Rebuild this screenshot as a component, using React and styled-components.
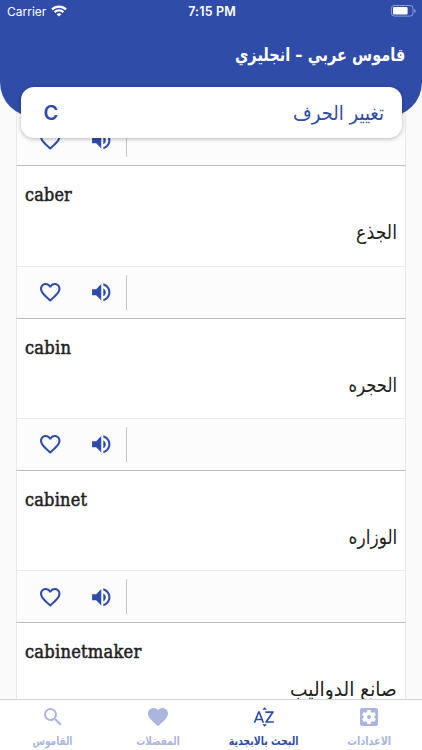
import styled, { createGlobalStyle } from "styled-components";
import {
  MdFavorite,
  MdFavoriteBorder,
  MdSearch,
  MdSettingsApplications,
  MdSortByAlpha,
  MdVolumeUp,
} from "react-icons/md";

const words = [
  { en: "caber", ar: "الجذع", enScale: 0.99, arScale: 0.87 },
  { en: "cabin", ar: "الحجره", enScale: 1.01, arScale: 0.82 },
  { en: "cabinet", ar: "الوزاره", enScale: 1.0, arScale: 0.85 },
  { en: "cabinetmaker", ar: "صانع الدواليب", enScale: 1.01, arScale: 0.93 },
];

const tabs = [
  { label: "القاموس", icon: MdSearch, scale: 0.78 },
  { label: "المفضلات", icon: MdFavorite, scale: 0.78 },
  { label: "البحث بالابجدية", icon: MdSortByAlpha, active: true, scale: 0.82 },
  { label: "الاعدادات", icon: MdSettingsApplications, scale: 0.84 },
];

export default function App() {
  return (
    <Screen>
      <GlobalStyle />
      <Header>
        <StatusBar>
          <Carrier>
            Carrier
            <WifiIcon />
          </Carrier>
          <Clock>7:15 PM</Clock>
          <BatteryIcon />
        </StatusBar>
        <Title>
          <Fit $scale={0.81}>قاموس عربي – انجليزي</Fit>
        </Title>
      </Header>

      <LetterPicker>
        <Letter>C</Letter>
        <PickerLabel>
          <Fit $scale={0.9}>تغيير الحرف</Fit>
        </PickerLabel>
      </LetterPicker>

      <ListArea>
        <WordList>
          <WordCard $collapsed>
            <WordActions />
          </WordCard>
          {words.map((word) => (
            <WordCard key={word.en}>
              <WordBody>
                <English>
                  <Fit $scale={word.enScale} $origin="left">{word.en}</Fit>
                </English>
                <Arabic>
                  <Fit $scale={word.arScale}>{word.ar}</Fit>
                </Arabic>
              </WordBody>
              <WordActions />
            </WordCard>
          ))}
        </WordList>
      </ListArea>

      <TabBar>
        {tabs.map(({ label, icon: Icon, active, scale }) => (
          <Tab key={label} $active={active}>
            <Icon />
            <TabLabel>
              <Fit $scale={scale} $origin="center">{label}</Fit>
            </TabLabel>
          </Tab>
        ))}
      </TabBar>
    </Screen>
  );
}

function WordActions() {
  return (
    <Actions>
      <ActionButton aria-label="favorite">
        <MdFavoriteBorder />
      </ActionButton>
      <ActionButton aria-label="listen">
        <MdVolumeUp />
      </ActionButton>
      <Divider />
    </Actions>
  );
}

function WifiIcon() {
  return (
    <svg width="16" height="12" viewBox="0 0 16 12" fill="none" stroke="#fff" strokeWidth="2.2">
      <path d="M1 4.4C4.9.6 11.1.6 15 4.4" />
      <path d="M3.6 7.1c2.5-2.4 6.3-2.4 8.8 0" />
      <path d="M8 11.6 5.6 9.2c1.4-1.3 3.4-1.3 4.8 0z" fill="#fff" stroke="none" />
    </svg>
  );
}

function BatteryIcon() {
  return (
    <svg width="26" height="12" viewBox="0 0 26 12">
      <rect x="0.5" y="0.5" width="21.5" height="10.6" rx="2.8" fill="none" stroke="#fff" strokeOpacity="0.45" />
      <rect x="2" y="2" width="14.6" height="7.6" rx="1.4" fill="#fff" />
      <path d="M23.3 4v3.8c.9-.3 1.3-1 1.3-1.9s-.4-1.6-1.3-1.9z" fill="#fff" fillOpacity="0.5" />
    </svg>
  );
}

// Styles
const GlobalStyle = createGlobalStyle`
  * {
    box-sizing: border-box;
  }

  body {
    margin: 0;
    font-family: "DejaVu Sans", sans-serif;
  }
`;

const Screen = styled.div`
  width: 422px;
  height: 750px;
  display: flex;
  flex-direction: column;
  background: #fafafa;
  overflow: hidden;
`;

const Header = styled.header`
  flex: none;
  height: 117px;
  background: #2f4ca9;
  border-radius: 0 0 35px 35px;
  color: #fff;
  position: relative;
  z-index: 1;
`;

const StatusBar = styled.div`
  height: 22px;
  display: grid;
  grid-template-columns: 1fr auto 1fr;
  align-items: center;
  padding: 0 5px 0 7px;
  font-family: Inter, sans-serif;
  font-size: 12.5px;

  > svg {
    justify-self: end;
  }
`;

const Carrier = styled.div`
  display: flex;
  align-items: center;
  gap: 5px;
  font-size: 12px;
`;

const Clock = styled.div`
  font-weight: 600;
  letter-spacing: 0.15px;
`;

const Title = styled.h1`
  margin: 0;
  padding: 19px 17px 0 0;
  direction: rtl;
  font-size: 18px;
  line-height: 28px;
  font-weight: bold;
`;

/* Stretches a run of text horizontally from its anchored side */
const Fit = styled.span`
  display: inline-block;
  white-space: nowrap;
  transform: scaleX(${(props) => props.$scale});
  transform-origin: ${(props) => props.$origin || "right"} center;
`;

const LetterPicker = styled.div`
  flex: none;
  height: 51px;
  margin: -30px 20.5px 0;
  padding: 0 17px 0 23px;
  display: flex;
  align-items: center;
  justify-content: space-between;
  background: #fff;
  border-radius: 13px;
  box-shadow: 0 1px 4px rgba(0, 0, 0, 0.28);
  color: #2f4ca9;
  position: relative;
  z-index: 2;
`;

const Letter = styled.span`
  font-family: Inter, sans-serif;
  font-size: 20px;
  font-weight: 600;
`;

const PickerLabel = styled.span`
  direction: rtl;
  font-size: 20px;
`;

const ListArea = styled.main`
  flex: 1;
  min-height: 0;
  margin-top: -27px;
  padding: 0 16px;
  display: flex;
  flex-direction: column;
  overflow: hidden;
`;

const WordList = styled.div`
  margin-top: 2.4px;
`;

const WordCard = styled.article`
  height: ${(props) => (props.$collapsed ? "53px" : "152.33px")};
  display: flex;
  flex-direction: column;
  background: #fff;
  border: 1px solid #e9e9e9;
  border-width: 0 1px;
  border-bottom: 1px solid #bdbdbd;
`;

const WordBody = styled.div`
  flex: 1;
  padding: 16px 8px 0;
  color: #222;
`;

const English = styled.div`
  font-family: "DejaVu Serif", serif;
  font-stretch: condensed;
  font-size: 18px;
  line-height: 26px;
  letter-spacing: 0.2px;
  -webkit-text-stroke: 0.5px #222;
`;

const Arabic = styled.div`
  direction: rtl;
  font-size: 20px;
  line-height: 28px;
  padding-top: 10px;
`;

const Actions = styled.div`
  height: 52px;
  display: flex;
  align-items: center;
  background: #fcfcfc;
  border-top: 1px solid #ebebeb;
`;

const ActionButton = styled.button`
  width: 51px;
  padding: 0;
  display: flex;
  justify-content: center;
  border: 0;
  background: none;
  color: #2f4ca9;
  font-size: 24.5px;

  &:first-child {
    margin-left: 7.3px;
  }
`;

const Divider = styled.span`
  width: 1px;
  height: 35px;
  background: #c4c4c4;
`;

const TabBar = styled.nav`
  flex: none;
  height: 51px;
  display: grid;
  grid-template-columns: repeat(4, 1fr);
  background: #fff;
  border-top: 1px solid #d5d5d8;
`;

const Tab = styled.div`
  display: flex;
  flex-direction: column;
  align-items: center;
  padding-top: 5px;
  color: ${(props) => (props.$active ? "#2f4ca9" : "#abb6de")};
  font-size: 24px;
`;

const TabLabel = styled.span`
  direction: rtl;
  font-size: 11.5px;
  line-height: 16px;
  font-weight: bold;
  padding-top: 4px;
`;
